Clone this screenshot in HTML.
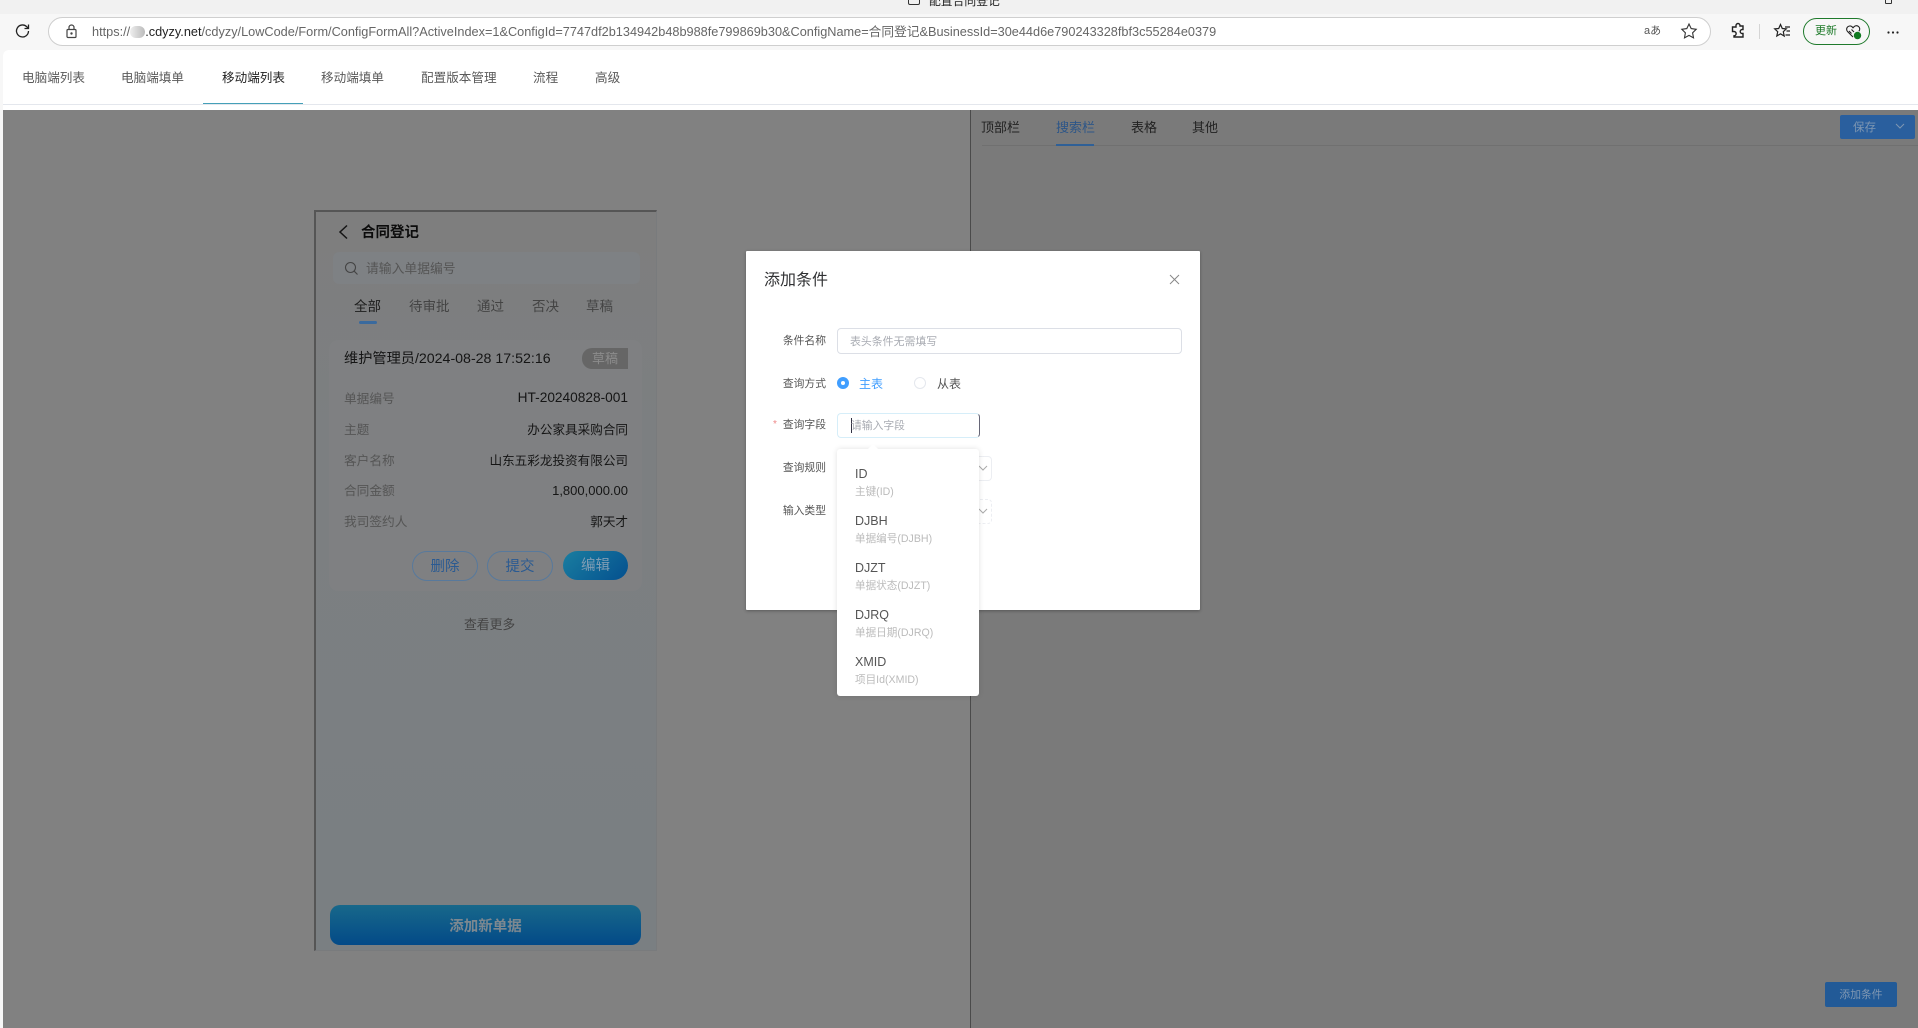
<!DOCTYPE html>
<html lang="zh"><head><meta charset="utf-8"><title>配置合同登记</title>
<style>
html,body{margin:0;padding:0;width:1918px;height:1028px;overflow:hidden;background:#f7f7f7}
body{position:relative;font-family:"Liberation Sans","Noto Sans CJK SC",sans-serif}
.a{position:absolute;white-space:nowrap;line-height:20px;height:20px;margin-top:1px}
.b{position:absolute;box-sizing:border-box}
svg{position:absolute;overflow:visible}
.r{text-align:right}.c{text-align:center}
.lab{font-size:10.8px;color:#555;width:60px;text-align:right;left:766px}
.pl{font-size:12.7px;color:#555;left:344px}
.pv{font-size:12.6px;color:#151515;right:1290px}
.m{font-size:12.5px;color:#555;left:855px}
.s{font-size:10.6px;color:#bbb;left:855px}
.t{font-size:12.6px;color:#5a5a5a}
</style></head><body>
<div class="b" style="left:0;top:0;width:1918px;height:14px;background:#f1f1f1"></div>
<div class="b" style="left:0;top:14px;width:1918px;height:36px;background:#f7f7f7"></div>
<div class="b" style="left:908px;top:-6px;width:12px;height:11px;border:1.5px solid #333;border-radius:2px"></div>
<div class="a" style="left:929px;top:-10px;font-size:11.800px;color:#222">配置合同登记</div>
<div class="b" style="left:1885px;top:-5px;width:7px;height:9px;border:1px solid #333;border-radius:1px"></div>

<svg style="left:14px;top:22px" width="18" height="18" viewBox="0 0 18 18" fill="none" stroke="#222" stroke-width="1.3"><path d="M14.5 9a6 6 0 1 1-2-4.5L14.5 6.500"/><path d="M14.500 2.500V6.500H10.500"/></svg>
<div class="b" style="left:48px;top:17px;width:1663px;height:29px;background:#fff;border:1px solid #cfcfcf;border-radius:15px"></div>
<svg style="left:65px;top:24px" width="13" height="15" viewBox="0 0 13 15" fill="none" stroke="#444" stroke-width="1.200"><rect x="2" y="5.500" width="9" height="8" rx="1"/><path d="M4 5.500V3.500a2.500 2.500 0 0 1 5 0v2"/><circle cx="6.500" cy="9.500" r=".6" fill="#444"/></svg>
<div class="a" id="u" style="left:92px;top:21px;font-size:12.720px;color:#666">https://<span style="display:inline-block;width:15px;height:12px;background:linear-gradient(90deg,#eee,#bbb);border-radius:6px;vertical-align:-2px"></span><span style="color:#222">.cdyzy.net</span>/cdyzy/LowCode/Form/ConfigFormAll?ActiveIndex=1&amp;ConfigId=7747df2b134942b48b988fe799869b30&amp;ConfigName=合同登记&amp;BusinessId=30e44d6e790243328fbf3c55284e0379</div>
<div class="a" style="left:1644px;top:20px;font-size:11px;color:#555">aあ</div>
<svg style="left:1680px;top:22px" width="18" height="18" viewBox="0 0 18 18" fill="none" stroke="#333" stroke-width="1.100"><path d="M9 2l2.200 4.600 5 .7-3.600 3.500.9 5L9 13.400 4.500 15.800l.9-5L1.800 7.300l5-.7z"/></svg>
<svg style="left:1729px;top:22px" width="18" height="18" viewBox="0 0 18 18" fill="none" stroke="#222" stroke-width="1.400"><path d="M7 3.500a2 2 0 0 1 4 0V4h3v3.500h-.8a2 2 0 0 0 0 4h.8V15H5v-1.200a2 2 0 0 0 0-4.300H3.500V5H7z"/></svg>
<div class="b" style="left:1759px;top:24px;width:1px;height:15px;background:#d5d5d5"></div>
<svg style="left:1773px;top:22px" width="18" height="18" viewBox="0 0 18 18" fill="none" stroke="#222" stroke-width="1.200"><path d="M7.500 2.500l1.800 4 4 .4-3 2.800.9 4.300-3.700-2.200L3.800 14l.9-4.300-3-2.800 4-.4z"/><path d="M12 5h5M13.500 9H17M12.500 13H17"/></svg>
<div class="b" style="left:1803px;top:18px;width:67px;height:27px;border:1px solid #1f7a2c;border-radius:14px"></div>
<div class="a" style="left:1815px;top:20px;font-size:11px;color:#1d7a28">更新</div>
<svg style="left:1845px;top:23px" width="18" height="18" viewBox="0 0 18 18" fill="none" stroke="#222" stroke-width="1.100"><path d="M8 14L2.500 8.500a3.300 3.300 0 0 1 4.500-4.800L8 4.800l1-1.100a3.300 3.300 0 0 1 4.800 4.600"/><path d="M4 8l2.500 2.500M6.500 6.500L9 9"/><circle cx="12.500" cy="12.500" r="3.700" fill="#117a22" stroke="none"/></svg>
<svg style="left:1887px;top:31px" width="12" height="3" viewBox="0 0 12 3" fill="#222"><circle cx="1.500" cy="1.500" r="1.100"/><circle cx="6" cy="1.500" r="1.100"/><circle cx="10.500" cy="1.500" r="1.100"/></svg>

<div class="b" style="left:3px;top:50px;width:1915px;height:60px;background:#fff;border-top-left-radius:6px"></div>
<div class="b" style="left:3px;top:104px;width:1915px;height:1px;background:#e4e7ed"></div>
<div class="a t" style="left:22px;top:67px">电脑端列表</div>
<div class="a t" style="left:121px;top:67px">电脑端填单</div>
<div class="a t" style="left:222px;top:67px;color:#222">移动端列表</div>
<div class="a t" style="left:321px;top:67px">移动端填单</div>
<div class="a t" style="left:421px;top:67px">配置版本管理</div>
<div class="a t" style="left:533px;top:67px">流程</div>
<div class="a t" style="left:595px;top:67px">高级</div>
<div class="b" style="left:203px;top:103px;width:100px;height:1px;background:#45a0b8"></div>

<div class="b" style="left:3px;top:110px;width:968px;height:918px;background:#818181"></div>
<div class="b" style="left:971px;top:110px;width:947px;height:918px;background:#7a7a7a"></div>
<div class="b" style="left:970px;top:110px;width:1px;height:918px;background:#4a4a4a"></div>

<div class="b" style="left:314px;top:210px;width:343px;height:741px;background:linear-gradient(180deg,#7e7e7e 0,#7c7f81 30%,#7a7f82 100%);border-top:2px solid #555;border-left:2px solid #555;border-right:1px solid #797b7d;border-bottom:1px solid #797b7d"></div>
<svg style="left:337px;top:224px" width="13" height="16" viewBox="0 0 13 16" fill="none" stroke="#151515" stroke-width="1.500"><path d="M10 1.500L3 8l7 6.500"/></svg>
<div class="a" style="left:361px;top:222px;font-size:14.500px;font-weight:bold;color:#0c0c0c">合同登记</div>
<div class="b" style="left:333px;top:252px;width:307px;height:32px;background:#7e8184;border-radius:6px"></div>
<svg style="left:344px;top:261px" width="15" height="15" viewBox="0 0 15 15" fill="none" stroke="#444" stroke-width="1.100"><circle cx="6.500" cy="6.500" r="5"/><path d="M10.200 10.200L13.500 13.500"/></svg>
<div class="a" style="left:366px;top:258px;font-size:12.800px;color:#555">请输入单据编号</div>
<div class="a" style="left:354px;top:296px;font-size:13.500px;color:#1c1c1c">全部</div>
<div class="a" style="left:409px;top:296px;font-size:13.500px;color:#444">待审批</div>
<div class="a" style="left:477px;top:296px;font-size:13.500px;color:#444">通过</div>
<div class="a" style="left:532px;top:296px;font-size:13.500px;color:#444">否决</div>
<div class="a" style="left:586px;top:296px;font-size:13.500px;color:#444">草稿</div>
<div class="b" style="left:359px;top:321px;width:18px;height:3px;border-radius:2px;background:#3a6a9e"></div>

<div class="b" style="left:329px;top:340px;width:313px;height:251px;background:#7f8082;border-radius:9px"></div>
<div class="a" style="left:344px;top:348px;font-size:14.200px;color:#151515">维护管理员/2024-08-28 17:52:16</div>
<div class="b c" style="left:582px;top:348px;width:46px;height:21px;background:#666;border-radius:10px 0 0 10px;font-size:13px;line-height:22px;color:#8c8c8c">草稿</div>
<div class="a pl" style="top:388px">单据编号</div><div class="a pv" style="top:387px;font-size:13.700px">HT-20240828-001</div>
<div class="a pl" style="top:419px">主题</div><div class="a pv" style="top:419px">办公家具采购合同</div>
<div class="a pl" style="top:450px">客户名称</div><div class="a pv" style="top:450px">山东五彩龙投资有限公司</div>
<div class="a pl" style="top:480px">合同金额</div><div class="a pv" style="top:480px;font-size:13px">1,800,000.00</div>
<div class="a pl" style="top:511px">我司签约人</div><div class="a pv" style="top:511px">郭天才</div>
<div class="b c" style="left:412px;top:551px;width:66px;height:30px;border:1px solid #58799c;border-radius:15px;font-size:14.500px;line-height:30px;color:#2a5a92">删除</div>
<div class="b c" style="left:487px;top:551px;width:66px;height:30px;border:1px solid #58799c;border-radius:15px;font-size:14.500px;line-height:30px;color:#2a5a92">提交</div>
<div class="b c" style="left:563px;top:551px;width:65px;height:29px;background:linear-gradient(135deg,#1a7ea0,#04508f);border-radius:15px;font-size:14.500px;line-height:31px;color:#7f9db4">编辑</div>
<div class="a" style="left:464px;top:614px;font-size:12.800px;color:#444">查看更多</div>
<div class="b c" style="left:330px;top:905px;width:311px;height:40px;background:linear-gradient(180deg,#18688a,#034a88);border-radius:10px;font-size:14.500px;font-weight:bold;line-height:44px;color:#7d8890">添加新单据</div>

<div class="a" style="left:981px;top:117px;font-size:13px;color:#222">顶部栏</div>
<div class="a" style="left:1056px;top:117px;font-size:13px;color:#2d5688">搜索栏</div>
<div class="a" style="left:1131px;top:117px;font-size:13px;color:#222">表格</div>
<div class="a" style="left:1192px;top:117px;font-size:13px;color:#222">其他</div>
<div class="b" style="left:982px;top:145px;width:936px;height:1px;background:#707070"></div>
<div class="b" style="left:1056px;top:144px;width:38px;height:2px;background:#2f6097"></div>
<div class="b" style="left:1840px;top:115px;width:75px;height:24px;background:#2a5f9e;border-radius:2px"></div>
<div class="a" style="left:1853px;top:117px;font-size:11.500px;color:#7f97b2">保存</div>
<svg style="left:1895px;top:123px" width="10" height="7" viewBox="0 0 10 7" fill="none" stroke="#7f97b2" stroke-width="1"><path d="M1 1l4 4 4-4"/></svg>
<div class="b c" style="left:1825px;top:982px;width:72px;height:25px;background:#225a97;border-radius:2px;font-size:10.800px;line-height:26px;color:#7f97b2">添加条件</div>

<div class="b" style="left:746px;top:251px;width:454px;height:359px;background:#fff;box-shadow:0 1px 3px rgba(0,0,0,.3);border-radius:1px"></div>
<div class="a" style="left:764px;top:270px;font-size:16px;color:#303133">添加条件</div>
<svg style="left:1169px;top:274px" width="11" height="11" viewBox="0 0 11 11" fill="none" stroke="#888" stroke-width="1"><path d="M1 1l9 9M10 1l-9 9"/></svg>
<div class="a lab" style="top:330px">条件名称</div>
<div class="b" style="left:837px;top:328px;width:345px;height:26px;border:1px solid #dcdfe6;border-radius:4px"></div>
<div class="a" style="left:850px;top:331px;font-size:10.900px;color:#a8abb2">表头条件无需填写</div>
<div class="a lab" style="top:373px">查询方式</div>
<div class="b" style="left:837px;top:377px;width:12px;height:12px;border-radius:50%;background:#409eff"></div>
<div class="b" style="left:841px;top:381px;width:4px;height:4px;border-radius:50%;background:#fff"></div>
<div class="a" style="left:859px;top:373px;font-size:12px;color:#409eff">主表</div>
<div class="b" style="left:914px;top:377px;width:12px;height:12px;border-radius:50%;border:1px solid #e4e7ed"></div>
<div class="a" style="left:937px;top:373px;font-size:12px;color:#555">从表</div>
<div class="a" style="left:773px;top:414px;font-size:10px;color:#e88">*</div>
<div class="a lab" style="top:414px">查询字段</div>
<div class="b" style="left:837px;top:413px;width:143px;height:25px;border:1px solid #d6eef9;border-right:1px solid #667;border-radius:4px"></div>
<div class="b" style="left:851px;top:418px;width:1px;height:15px;background:#334"></div>
<div class="a" style="left:851px;top:415px;font-size:10.800px;color:#a8abb2">请输入字段</div>
<div class="a lab" style="top:457px">查询规则</div>
<div class="b" style="left:975px;top:456px;width:17px;height:25px;border:1px solid #eceef2;border-left:0;border-radius:0 4px 4px 0"></div>
<svg style="left:978px;top:465px" width="10" height="7" viewBox="0 0 10 7" fill="none" stroke="#aaa" stroke-width="1"><path d="M1 1l4 4 4-4"/></svg>
<div class="a lab" style="top:500px">输入类型</div>
<div class="b" style="left:975px;top:499px;width:17px;height:25px;border:1px dashed #eceef2;border-left:0;border-radius:0 4px 4px 0"></div>
<svg style="left:978px;top:508px" width="10" height="7" viewBox="0 0 10 7" fill="none" stroke="#aaa" stroke-width="1"><path d="M1 1l4 4 4-4"/></svg>

<div class="b" style="left:837px;top:449px;width:142px;height:247px;background:#fff;border-radius:3px;box-shadow:0 0 6px rgba(0,0,0,.12)"></div>
<svg style="left:867px;top:444px" width="12" height="6" viewBox="0 0 12 6"><path d="M0 6L6 0l6 6z" fill="#fff"/></svg>
<div class="a m" style="top:463px">ID</div><div class="a s" style="top:481px">主键(ID)</div>
<div class="a m" style="top:510px">DJBH</div><div class="a s" style="top:528px">单据编号(DJBH)</div>
<div class="a m" style="top:557px">DJZT</div><div class="a s" style="top:575px">单据状态(DJZT)</div>
<div class="a m" style="top:604px">DJRQ</div><div class="a s" style="top:622px">单据日期(DJRQ)</div>
<div class="a m" style="top:651px">XMID</div><div class="a s" style="top:669px">项目Id(XMID)</div>
</body></html>
